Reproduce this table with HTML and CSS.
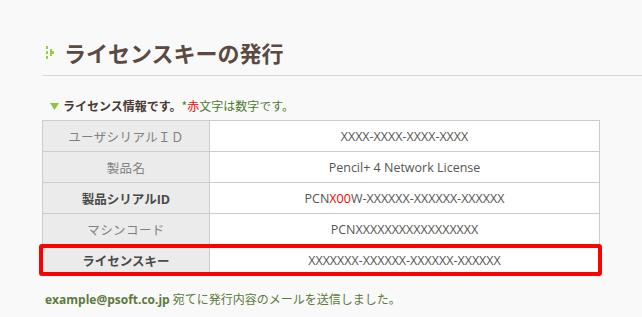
FILE: index.html
```html
<!DOCTYPE html>
<html lang="ja">
<head>
<meta charset="utf-8">
<link rel="stylesheet" href="styles.css">
</head>
<body>
<div class="page">
  <h1 class="title">
    <svg class="title-icon" width="10" height="13" viewBox="0 0 10 13">
      <rect x="0" y="0" width="2" height="3" fill="#9ccb4a"/>
      <rect x="0" y="5" width="2" height="3" fill="#9ccb4a"/>
      <rect x="0" y="10" width="2" height="3" fill="#9ccb4a"/>
      <rect x="4" y="3" width="2" height="7" fill="#9ccb4a"/>
      <rect x="6" y="5" width="2" height="3" fill="#9ccb4a"/>
    </svg>
    <span>ライセンスキーの発行</span>
  </h1>
  <p class="note">
    <svg class="note-icon" width="9" height="7" viewBox="0 0 9 7"><polygon points="0,0 9,0 4.5,7" fill="#8cc63f"/></svg>
    <span class="note-main">ライセンス情報です。</span><span class="note-sub">*<span class="red">赤</span>文字は数字です。</span>
  </p>
  <div class="table">
    <div class="row">
      <div class="th">ユーザシリアルＩＤ</div>
      <div class="td">XXXX-XXXX-XXXX-XXXX</div>
    </div>
    <div class="row">
      <div class="th">製品名</div>
      <div class="td">Pencil+ 4 Network License</div>
    </div>
    <div class="row">
      <div class="th strong">製品シリアルID</div>
      <div class="td">PCN<span class="red">X00</span>W-XXXXXX-XXXXXX-XXXXXX</div>
    </div>
    <div class="row">
      <div class="th">マシンコード</div>
      <div class="td">PCNXXXXXXXXXXXXXXXXX</div>
    </div>
    <div class="row row-highlight">
      <div class="th strong">ライセンスキー</div>
      <div class="td">XXXXXXX-XXXXXX-XXXXXX-XXXXXX</div>
    </div>
  </div>
  <p class="footer"><b class="mail">example@psoft.co.jp</b> 宛てに発行内容のメールを送信しました。</p>
</div>
</body>
</html>
```
FILE: styles.css
```css
html, body {
  margin: 0;
  padding: 0;
  background: #f9f9f9;
}
body {
  font-family: "Open Sans", "Noto Sans CJK JP", sans-serif;
  width: 642px;
  height: 317px;
  overflow: hidden;
}
.page {
  padding: 36px 0 0 42px;
}
.title {
  margin: 0;
  display: flex;
  align-items: center;
  gap: 8px;
  font-size: 22px;
  font-weight: bold;
  color: #5a4a42;
  line-height: 32px;
  padding: 0 0 7px 4px;
  border-bottom: 1px solid #d9d9d9;
  font-family: "Noto Sans CJK JP", sans-serif;
}
.title-icon {
  display: block;
  flex: none;
}
.note {
  margin: 20px 0 0 8px;
  display: flex;
  align-items: center;
  font-size: 12px;
  line-height: 20px;
  font-family: "Noto Sans CJK JP", sans-serif;
}
.note-icon {
  margin-right: 4px;
  display: block;
}
.note-main {
  color: #4a3a32;
  font-weight: bold;
}
.note-sub {
  color: #4f7a2e;
}
.red {
  color: #ff0000;
}
.table {
  margin-top: 4px;
  width: 558px;
  box-sizing: border-box;
  border: 1px solid #cccccc;
  border-bottom: none;
  background: #fff;
}
.row {
  display: flex;
  height: 31px;
  border-bottom: 1px solid #cccccc;
  box-sizing: border-box;
  font-size: 12.5px;
}
.th {
  width: 166px;
  flex: none;
  background: #ebebeb;
  border-right: 1px solid #cccccc;
  color: #808080;
  display: flex;
  align-items: center;
  justify-content: center;
  letter-spacing: 0.4px;
}
.th.strong {
  color: #4a4a4a;
  font-weight: bold;
  letter-spacing: 0;
}
.td {
  flex: 1;
  color: #555555;
  display: flex;
  align-items: center;
  justify-content: center;
}
.td-wide {
  letter-spacing: 0.2px;
}
.row-highlight {
  position: relative;
}
.row-highlight::after {
  content: "";
  position: absolute;
  left: -4px;
  right: -3px;
  top: -1px;
  bottom: -1px;
  border: 4px solid #ff0000;
  border-radius: 3px;
}
.footer {
  margin: 14px 0 0 3px;
  font-size: 12px;
  color: #5d7a3c;
  font-family: "Open Sans", "Noto Sans CJK JP", sans-serif;
}
.mail {
  font-weight: bold;
}
```
